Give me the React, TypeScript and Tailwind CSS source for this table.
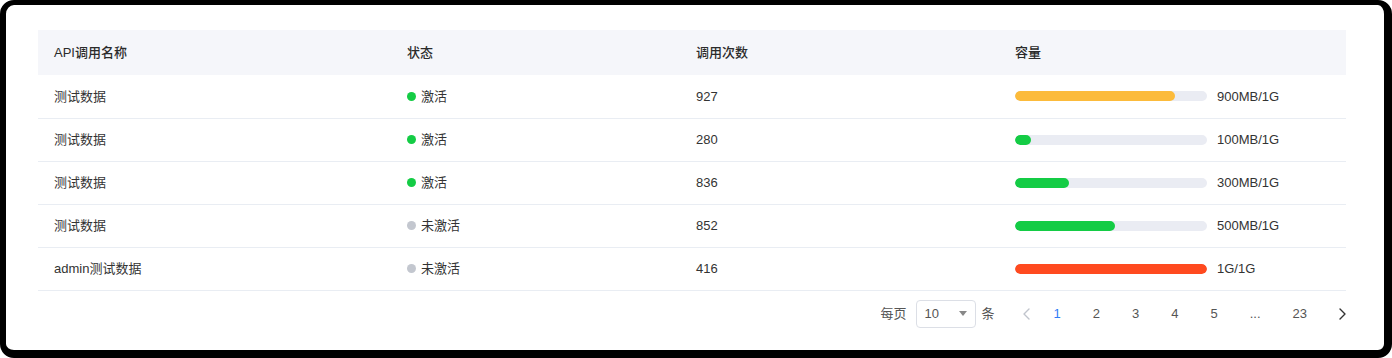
type Row = {
  name: string;
  active: boolean;
  count: number;
  fill: number;
  color: string;
  capacity: string;
};

const rows: Row[] = [
  { name: "测试数据", active: true, count: 927, fill: 160, color: "bg-[#fcbb3b]", capacity: "900MB/1G" },
  { name: "测试数据", active: true, count: 280, fill: 16, color: "bg-[#14cc45]", capacity: "100MB/1G" },
  { name: "测试数据", active: true, count: 836, fill: 54, color: "bg-[#14cc45]", capacity: "300MB/1G" },
  { name: "测试数据", active: false, count: 852, fill: 100, color: "bg-[#14cc45]", capacity: "500MB/1G" },
  { name: "admin测试数据", active: false, count: 416, fill: 192, color: "bg-[#ff4a1f]", capacity: "1G/1G" },
];

const pages = ["1", "2", "3", "4", "5", "...", "23"];

const Chevron = ({ left, color }: { left?: boolean; color: string }) => (
  <svg width="7" height="12" viewBox="0 0 7 12" fill="none">
    <path
      d={left ? "M6 1L1 6l5 5" : "M1 1l5 5-5 5"}
      stroke={color}
      strokeWidth="1.4"
      strokeLinecap="round"
      strokeLinejoin="round"
    />
  </svg>
);

const App = () => {
  return (
    <div
      className="h-[358px] w-[1392px] bg-white text-[13px] text-[#333]"
      style={{ fontFamily: '"Liberation Sans", "Noto Sans CJK SC", sans-serif' }}
    >
      <div className="h-full w-full rounded-[14px] border-t-[5px] border-r-[8px] border-b-[8px] border-l-[6px] border-black bg-white pt-[25px] pl-[32px]">
        <table className="w-[1308px] table-fixed border-collapse">
          <colgroup>
            <col className="w-[353px]" />
            <col className="w-[289px]" />
            <col className="w-[319px]" />
            <col className="w-[347px]" />
          </colgroup>
          <thead>
            <tr className="h-[45px] bg-[#f5f6fa] text-left">
              <th className="pl-4 font-medium text-[#2b2b2b]">API调用名称</th>
              <th className="pl-4 font-medium text-[#2b2b2b]">状态</th>
              <th className="pl-4 font-medium text-[#2b2b2b]">调用次数</th>
              <th className="pl-4 font-medium text-[#2b2b2b]">容量</th>
            </tr>
          </thead>
          <tbody>
            {rows.map((row, i) => (
              <tr key={i} className="h-[43px] border-b border-[#e9edf3]">
                <td className="pl-4">{row.name}</td>
                <td className="pl-4">
                  <div className="flex items-center">
                    <span
                      className={
                        row.active
                          ? "mr-[5px] h-[9px] w-[9px] rounded-full bg-[#14cc45]"
                          : "mr-[5px] h-[9px] w-[9px] rounded-full bg-[#c3c7cf]"
                      }
                    />
                    <span>{row.active ? "激活" : "未激活"}</span>
                  </div>
                </td>
                <td className="pl-4">{row.count}</td>
                <td className="pl-4">
                  <div className="flex items-center">
                    <div className="h-[10px] w-[192px] overflow-hidden rounded-full bg-[#eaecf3]">
                      <div className={`h-full rounded-full ${row.color}`} style={{ width: row.fill }} />
                    </div>
                    <span className="ml-[10px]">{row.capacity}</span>
                  </div>
                </td>
              </tr>
            ))}
          </tbody>
        </table>

        <div className="mt-[9px] flex w-[1308px] items-center justify-end">
          <span className="text-[#555]">每页</span>
          <div className="ml-[9px] flex h-[28px] w-[60px] items-center justify-between rounded-[4px] border border-[#dcdfe6] pr-[8px] pl-[8px]">
            <span className="text-[#555]">10</span>
            <svg width="8" height="5" viewBox="0 0 8 5">
              <path d="M0 0h8L4 5z" fill="#888" />
            </svg>
          </div>
          <span className="ml-[6px] text-[#555]">条</span>
          <div className="ml-[28px] flex">
            <Chevron left color="#c0c4cc" />
          </div>
          <div className="ml-[8px] flex">
            {pages.map((p) => (
              <span
                key={p}
                className={p === "1" ? "px-4 text-[#2f7df6]" : "px-4 text-[#555]"}
              >
                {p}
              </span>
            ))}
          </div>
          <div className="ml-[16px] flex">
            <Chevron color="#333" />
          </div>
        </div>
      </div>
    </div>
  );
};

export default App;
